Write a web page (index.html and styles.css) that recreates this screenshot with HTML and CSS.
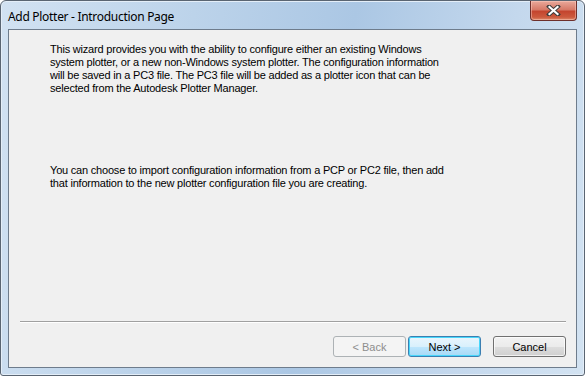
FILE: index.html
```html
<!DOCTYPE html>
<html>
  <head>
    <meta charset="utf-8">
    <title>Add Plotter - Introduction Page</title>
    <link rel="stylesheet" href="styles.css">
  </head>
  <body>
    <div class="window">
      <div class="titlebar">
        <div class="title">Add Plotter - Introduction Page</div>
        <div class="close">
          <svg width="15" height="11" viewBox="0 0 15 11">
            <path d="M3 1.5 L12 9.5 M12 1.5 L3 9.5" stroke="#3b3b3b" stroke-width="4" stroke-linecap="square"/>
            <path d="M3.5 2 L11.5 9 M11.5 2 L3.5 9" stroke="#fff" stroke-width="2.2" stroke-linecap="square"/>
          </svg>
        </div>
      </div>

      <div class="client">
        <div class="page">
          <p class="par">
            This wizard provides you with the ability to configure either an existing Windows<br>
            system plotter, or a new non-Windows system plotter. The configuration information<br>
            will be saved in a PC3 file. The PC3 file will be added as a plotter icon that can be<br>
            selected from the Autodesk Plotter Manager.
          </p>
          <p class="par par_second">
            You can choose to import configuration information from a PCP or PC2 file, then add<br>
            that information to the new plotter configuration file you are creating.
          </p>
        </div>

        <div class="separator"></div>

        <div class="buttons">
          <div class="btn btn_disabled">&lt; Back</div>
          <div class="btn btn_default">Next &gt;</div>
          <div class="btn btn_cancel">Cancel</div>
        </div>
      </div>
    </div>
  </body>
</html>
```

FILE: styles.css
```css
* {
  margin: 0;
  padding: 0;
  box-sizing: border-box;
}

body {
  background: #fff;
  font-family: "Liberation Sans", Arial, sans-serif;
}

.window {
  width: 585px;
  height: 376px;
  display: flex;
  flex-direction: column;
  padding: 0 7px 7px 7px;
  border: 1px solid #5a6572;
  border-radius: 6px 6px 3px 3px;
  background: linear-gradient(100deg, #d2e2f2 0%, #bcd3ea 30%, #abc7e4 55%, #c4d8ed 80%, #d3e3f2 100%);
  box-shadow: inset 0 0 0 1px #e4eef8;
}

.titlebar {
  height: 28px;
  display: flex;
  align-items: flex-start;
}

.title {
  padding-top: 7px;
  font-family: "Noto Sans", "Open Sans", sans-serif;
  font-size: 12px;
  color: #000;
  letter-spacing: -0.3px;
}

.close {
  margin-left: auto;
  width: 47px;
  height: 20px;
  display: flex;
  align-items: center;
  justify-content: center;
  border: 1px solid #6d2f2b;
  border-top: none;
  border-radius: 0 0 4px 4px;
  background: linear-gradient(#e9a99b 0%, #d67a68 45%, #c4452f 55%, #cc5a3e 85%, #dd8a6c 100%);
  box-shadow: inset 0 0 0 1px rgba(255, 210, 200, 0.45);
}

.client {
  flex: 1;
  display: flex;
  flex-direction: column;
  border: 1px solid #6e7c8c;
  background: #f0f0f0;
}

.page {
  flex: 1;
  padding: 13px 0 0 41px;
}

.par {
  font-size: 11px;
  line-height: 13px;
  letter-spacing: -0.2px;
  color: #000;
}

.par_second {
  margin-top: 69px;
}

.separator {
  height: 1px;
  margin: 0 10px 0 11px;
  background: #a0a0a0;
  border-bottom: 1px solid #fff;
  box-sizing: content-box;
}

.buttons {
  display: flex;
  justify-content: flex-end;
  padding: 13px 10px 10px 0;
}

.btn {
  width: 73px;
  height: 21px;
  display: flex;
  align-items: center;
  justify-content: center;
  font-size: 11px;
  color: #000;
  border: 1px solid #707070;
  border-radius: 3px;
  background: linear-gradient(#f2f2f2 0%, #ebebeb 50%, #dddddd 51%, #cfcfcf 100%);
  box-shadow: inset 0 0 0 1px rgba(255, 255, 255, 0.7);
}

.btn_disabled {
  color: #8d8d8d;
  border-color: #adb2b5;
  background: #f4f4f4;
  box-shadow: none;
}

.btn_default {
  margin-left: 2px;
  border-color: #3c7fb1;
  background: linear-gradient(#eaf6fd 0%, #d9f0fc 50%, #bee6fd 51%, #a7d9f5 100%);
  box-shadow: inset 0 0 0 1px #48d7fb;
}

.btn_cancel {
  margin-left: 12px;
}
```
